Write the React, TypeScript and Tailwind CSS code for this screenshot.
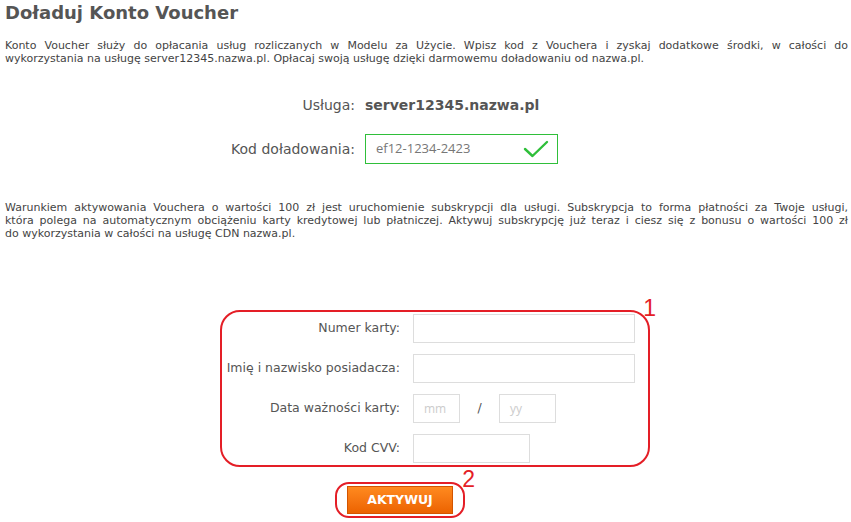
import React from "react";

const body = { fontFamily: '"DejaVu Sans", Verdana, sans-serif' };

function JLine({ children, last = false }: { children: React.ReactNode; last?: boolean }) {
  return (
    <div className={last ? "text-left" : "text-justify [text-align-last:justify]"}>{children}</div>
  );
}

export default function App() {
  return (
    <div className="w-[851px] h-[522px] bg-white text-[#555] overflow-hidden relative" style={body}>
      <div className="pl-[5px] pr-[3px]">
        <h1 className="text-[18px] leading-[22px] font-bold text-[#555] mt-[2px]">Doładuj Konto Voucher</h1>
        <div className="mt-[15px] text-[11px] leading-[13px] text-[#444]">
          <JLine>Konto Voucher służy do opłacania usług rozliczanych w Modelu za Użycie. Wpisz kod z Vouchera i zyskaj dodatkowe środki, w całości do</JLine>
          <JLine last>wykorzystania na usługę server12345.nazwa.pl. Opłacaj swoją usługę dzięki darmowemu doładowaniu od nazwa.pl.</JLine>
        </div>
      </div>

      <div className="mt-[30px] grid grid-cols-[355px_auto] gap-x-[10px] items-center">
        <div className="text-right text-[14px] leading-[20px] text-[#555]">Usługa:</div>
        <div className="text-[14px] leading-[20px] font-bold text-[#555]">server12345.nazwa.pl</div>
        <div className="text-right text-[14px] leading-[20px] text-[#555] mt-[19px]">Kod doładowania:</div>
        <div className="mt-[19px] w-[193px] h-[30px] border-[1.5px] border-[#2fbf3a] flex items-center justify-between pl-[10px] pr-[8px]">
          <span className="text-[13px] text-[#777]" style={{ fontFamily: '"Open Sans", sans-serif' }}>ef12-1234-2423</span>
          <svg width="26" height="18" viewBox="0 0 26 18" fill="none">
            <path d="M2 9 L9.5 16 L24 2" stroke="#2fbf3a" strokeWidth="2.4" strokeLinecap="round" strokeLinejoin="round" />
          </svg>
        </div>
      </div>

      <div className="pl-[5px] pr-[3px] mt-[37px] text-[11px] leading-[13px] text-[#444]">
        <JLine>Warunkiem aktywowania Vouchera o wartości 100 zł jest uruchomienie subskrypcji dla usługi. Subskrypcja to forma płatności za Twoje usługi,</JLine>
        <JLine>która polega na automatycznym obciążeniu karty kredytowej lub płatniczej. Aktywuj subskrypcję już teraz i ciesz się z bonusu o wartości 100 zł</JLine>
        <JLine last>do wykorzystania w całości na usługę CDN nazwa.pl.</JLine>
      </div>

      <div className="relative ml-[220px] mt-[70px] w-[430px] h-[157px] border-2 border-[#e41e26] rounded-[20px]">
        <span className="absolute -right-[8px] -top-[15px] text-[23px] leading-[22px] text-[#e41e26]" style={{ fontFamily: '"Liberation Sans", Arial, sans-serif' }}>1</span>
        <div className="grid grid-cols-[178px_auto] gap-x-[13px] gap-y-[11px] items-center mt-[2px] text-[12.5px] text-[#555] whitespace-nowrap">
          <div className="text-right">Numer karty:</div>
          <div className="w-[222px] h-[29px] border border-[#ddd]" />
          <div className="text-right">Imię i nazwisko posiadacza:</div>
          <div className="w-[222px] h-[29px] border border-[#ddd]" />
          <div className="text-right">Data ważności karty:</div>
          <div className="flex items-center">
            <div className="w-[47px] h-[29px] border border-[#ddd] flex items-center pl-[10px] text-[12px] text-[#ccc]" style={{ fontFamily: '"Open Sans", sans-serif' }}>mm</div>
            <div className="w-[39px] text-center text-[#555]">/</div>
            <div className="w-[57px] h-[29px] border border-[#ddd] flex items-center pl-[10px] text-[12px] text-[#ccc]" style={{ fontFamily: '"Open Sans", sans-serif' }}>yy</div>
          </div>
          <div className="text-right">Kod CVV:</div>
          <div className="w-[117px] h-[29px] border border-[#ddd]" />
        </div>
      </div>

      <div className="relative ml-[335px] mt-[15px] w-[130px] h-[36px] border-2 border-[#e41e26] rounded-[14px] flex items-center justify-center">
        <span className="absolute -right-[12px] -top-[16px] text-[23px] leading-[22px] text-[#e41e26]" style={{ fontFamily: '"Liberation Sans", Arial, sans-serif' }}>2</span>
        <div className="w-[106px] h-[28px] border border-[#d35400] bg-gradient-to-b from-[#ff8a1e] to-[#ec6200] flex items-center justify-center text-white font-bold text-[12.5px]">
          AKTYWUJ
        </div>
      </div>
    </div>
  );
}
